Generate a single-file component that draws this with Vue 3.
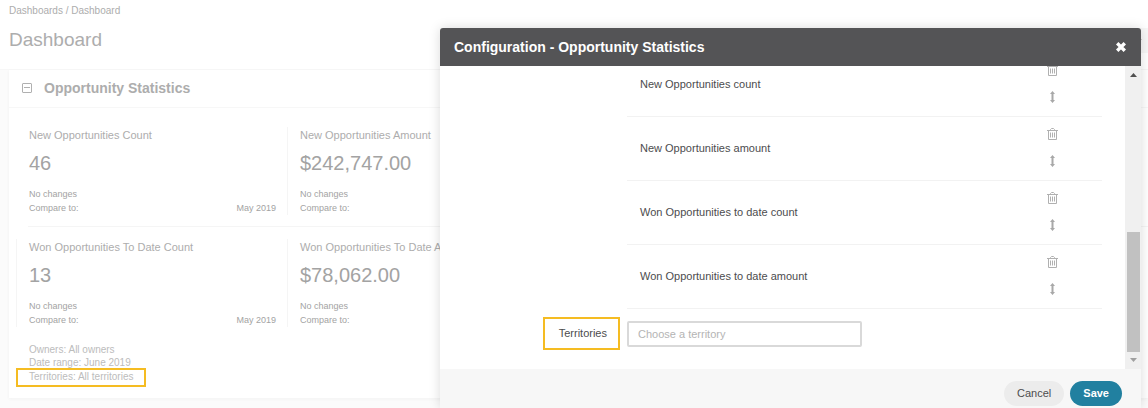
<script setup>
import { ref } from 'vue'

const stats = [
  { title: 'New Opportunities Count', value: '46', compare: 'May 2019' },
  { title: 'New Opportunities Amount', value: '$242,747.00', compare: '' },
  { title: 'Won Opportunities To Date Count', value: '13', compare: 'May 2019' },
  { title: 'Won Opportunities To Date Amount', value: '$78,062.00', compare: '' },
]

const metrics = [
  'New Opportunities count',
  'New Opportunities amount',
  'Won Opportunities to date count',
  'Won Opportunities to date amount',
]

const territory = ref('')
</script>

<template>
  <div class="page">
    <header class="top">
      <nav class="crumbs"><a href="#">Dashboards</a> / <a href="#">Dashboard</a></nav>
      <div class="title-row">
        <h1>Dashboard</h1>
        <button class="more" type="button" aria-label="More actions">
          <svg width="8" height="4" viewBox="0 0 8 4"><path d="M0 0h8L4 4z" fill="#a8a8a8" /></svg>
        </button>
      </div>
    </header>

    <main class="card">
      <div class="card-head">
        <button class="fold" type="button" aria-label="Collapse">
          <svg width="10" height="10" viewBox="0 0 10 10" fill="none" stroke="#b0b0b0">
            <rect x="0.5" y="0.5" width="9" height="9" rx="0.5" /><path d="M2 4.5h6" />
          </svg>
        </button>
        <h2>Opportunity Statistics</h2>
      </div>
      <div class="stats">
        <template v-for="(s, i) in stats" :key="s.title">
          <hr v-if="i === 2" class="rule" />
          <section class="stat" :class="{ plain: i === 0 }">
            <h3>{{ s.title }}</h3>
            <p class="value">{{ s.value }}</p>
            <p class="note">No changes</p>
            <p class="note pair"><span>Compare to:</span><span>{{ s.compare }}</span></p>
          </section>
        </template>
      </div>
      <div class="filters">
        <p>Owners: All owners</p>
        <p>Date range: June 2019</p>
        <p class="marked">Territories: All territories</p>
      </div>
    </main>

    <div class="dialog" role="dialog" aria-labelledby="dialog-title">
      <div class="dialog-head">
        <h2 id="dialog-title">Configuration - Opportunity Statistics</h2>
        <button class="close" type="button" aria-label="Close">
          <svg width="12" height="12" viewBox="0 0 12 12" fill="none" stroke="#fff" stroke-width="3.4">
            <path d="M2.2 2.2l7.6 7.6M9.8 2.2l-7.6 7.6" />
          </svg>
        </button>
      </div>
      <div class="dialog-body">
        <div class="content">
          <ul class="metrics">
            <li v-for="m in metrics" :key="m">
              <span>{{ m }}</span>
              <div class="tools">
                <button type="button" aria-label="Delete">
                  <svg width="11" height="12" viewBox="0 0 11 12" fill="none" stroke="#b0b0b0">
                    <path d="M0 2.5h11M3.5 2.5v-1l1-1h2l1 1v1M1.5 2.5v9h8v-9M3.5 4.5v5M5.5 4.5v5M7.5 4.5v5" />
                  </svg>
                </button>
                <button type="button" aria-label="Move">
                  <svg width="5" height="12" viewBox="0 0 5 12" fill="#a8a8a8">
                    <path d="M2.5 0L5 3H3.5v6H5L2.5 12 0 9h1.5V3H0z" />
                  </svg>
                </button>
              </div>
            </li>
          </ul>
          <div class="field">
            <label for="territory">Territories</label>
            <input id="territory" v-model="territory" type="text" placeholder="Choose a territory" />
          </div>
        </div>
        <div class="scrollbar" aria-hidden="true">
          <svg width="7" height="4" viewBox="0 0 7 4"><path d="M0 4h7L3.5 0z" fill="#505050" /></svg>
          <div class="thumb"></div>
          <svg width="7" height="4" viewBox="0 0 7 4"><path d="M0 0h7L3.5 4z" fill="#a0a0a0" /></svg>
        </div>
      </div>
      <div class="dialog-foot">
        <button class="btn" type="button">Cancel</button>
        <button class="btn save" type="button">Save</button>
      </div>
    </div>
  </div>
</template>

<style>
html,
body {
  background: #fbfbfb;
}
</style>

<style scoped>
.page {
  position: relative;
  min-height: 100vh;
  overflow: hidden;
  font-family: "Liberation Sans", Arial, sans-serif;
  font-size: 11px;
  color: #adadad;
}
h1, h2, h3, p, ul {
  margin: 0;
  padding: 0;
}
button {
  border: 0;
  padding: 0;
  background: none;
  font: inherit;
  color: inherit;
  cursor: pointer;
}
svg {
  display: block;
}
.top {
  background: #fff;
  border-bottom: 1px solid #f7f7f7;
  padding: 4px 0 16px 9px;
}
.crumbs {
  font-size: 10px;
  line-height: 14px;
}
.crumbs a {
  color: inherit;
  text-decoration: none;
}
.title-row {
  display: flex;
  justify-content: space-between;
  align-items: flex-start;
  margin-top: 10px;
  height: 25px;
}
h1 {
  font-size: 19px;
  line-height: 24px;
  font-weight: 400;
}
.more {
  align-self: stretch;
  width: 14px;
  background: #f7f7f7;
}
.card {
  margin-left: 9px;
  background: #fff;
  box-shadow: 0 1px 3px #f2f2f2;
  padding-bottom: 11px;
}
.card-head {
  display: flex;
  align-items: center;
  gap: 12px;
  height: 35px;
  padding: 0 0 2px 13px;
  border-bottom: 1px solid #f7f7f7;
}
.card-head h2 {
  font-size: 14px;
  line-height: 18px;
}
.stats {
  display: grid;
  grid-template-columns: 271px 1fr;
  padding: 19px 0 0 7px;
}
.stat {
  height: 88px;
  padding: 0 11px 0 12px;
  border-left: 1px solid #f5f5f5;
}
.stat.plain {
  border-left-color: transparent;
}
.stat h3 {
  font-size: 11px;
  line-height: 16px;
  font-weight: 400;
  white-space: nowrap;
}
.value {
  margin-top: 8px;
  font-size: 20px;
  line-height: 24px;
  color: #a3a3a3;
}
.note {
  font-size: 9px;
  line-height: 14px;
  color: #a3a3a3;
}
.value + .note {
  margin-top: 12px;
}
.pair {
  display: flex;
  justify-content: space-between;
}
.rule {
  grid-column: 1 / -1;
  width: auto;
  margin: 11px 0 12px 12px;
  border: 0;
  border-top: 1px solid #f5f5f5;
}
.filters {
  padding: 16px 0 0 7px;
  font-size: 10px;
  line-height: 13px;
  color: #bcbcbc;
}
.filters p {
  padding-left: 13px;
}
.filters .marked {
  width: fit-content;
  margin-top: -1px;
  padding: 0 11px 2px 11px;
  border: 2px solid #f5bc22;
}
.dialog {
  position: absolute;
  top: 28px;
  bottom: 0;
  left: 440px;
  right: 7px;
  display: flex;
  flex-direction: column;
  border-radius: 3px 3px 0 0;
  background: #fff;
  box-shadow: 0 0 12px rgba(0, 0, 0, 0.15);
  color: #4c4c4e;
}
.dialog-head {
  display: flex;
  align-items: center;
  justify-content: space-between;
  flex: none;
  height: 38px;
  padding: 0 14px;
  border-radius: 3px 3px 0 0;
  background: #545456;
  color: #fff;
}
.dialog-head h2 {
  font-size: 14px;
  line-height: 18px;
}
.dialog-body {
  flex: 1;
  min-height: 0;
  display: flex;
}
.content {
  flex: 1;
  display: flex;
  flex-direction: column;
  justify-content: flex-end;
  overflow: hidden;
  padding: 0 23px 19px 103px;
}
.metrics {
  margin-left: 84px;
  list-style: none;
}
.metrics li {
  display: flex;
  align-items: center;
  justify-content: space-between;
  height: 61px;
  padding: 0 44px 2px 13px;
  border-bottom: 1px solid #f2f2f2;
}
.tools {
  display: flex;
  flex-direction: column;
  align-items: center;
  gap: 15px;
}
.field {
  display: flex;
  align-items: center;
  gap: 7px;
  margin-top: 8px;
}
.field label {
  box-sizing: border-box;
  width: 77px;
  height: 33px;
  padding-right: 11px;
  border: 2px solid #f5bc22;
  line-height: 29px;
  text-align: right;
}
.field input {
  box-sizing: border-box;
  width: 235px;
  height: 26px;
  padding: 0 9px;
  border: 2px solid #d9d9d9;
  border-radius: 2px;
  background: #fff;
  font: inherit;
  color: inherit;
}
.field input::placeholder {
  color: #b4b4b4;
  opacity: 1;
}
.scrollbar {
  flex: none;
  display: flex;
  flex-direction: column;
  align-items: center;
  justify-content: space-between;
  width: 16px;
  padding: 7px 0;
  box-sizing: border-box;
  background: #f0f0f0;
}
.thumb {
  width: 13px;
  height: 120px;
  margin: auto 0 6px;
  background: #c1c1c1;
}
.dialog-foot {
  flex: none;
  display: flex;
  justify-content: flex-end;
  gap: 9px;
  padding: 12px 19px 2px;
  background: #f7f7f7;
}
.btn {
  height: 25px;
  padding: 0 12px 1px;
  border-radius: 13px;
  background: #ececec;
}
.btn.save {
  background: #2180a0;
  color: #fff;
  font-weight: 700;
}
.dialog-foot {
  gap: 6px;
}
.dialog-foot .btn {
  padding: 0 13px 2px;
}
</style>
